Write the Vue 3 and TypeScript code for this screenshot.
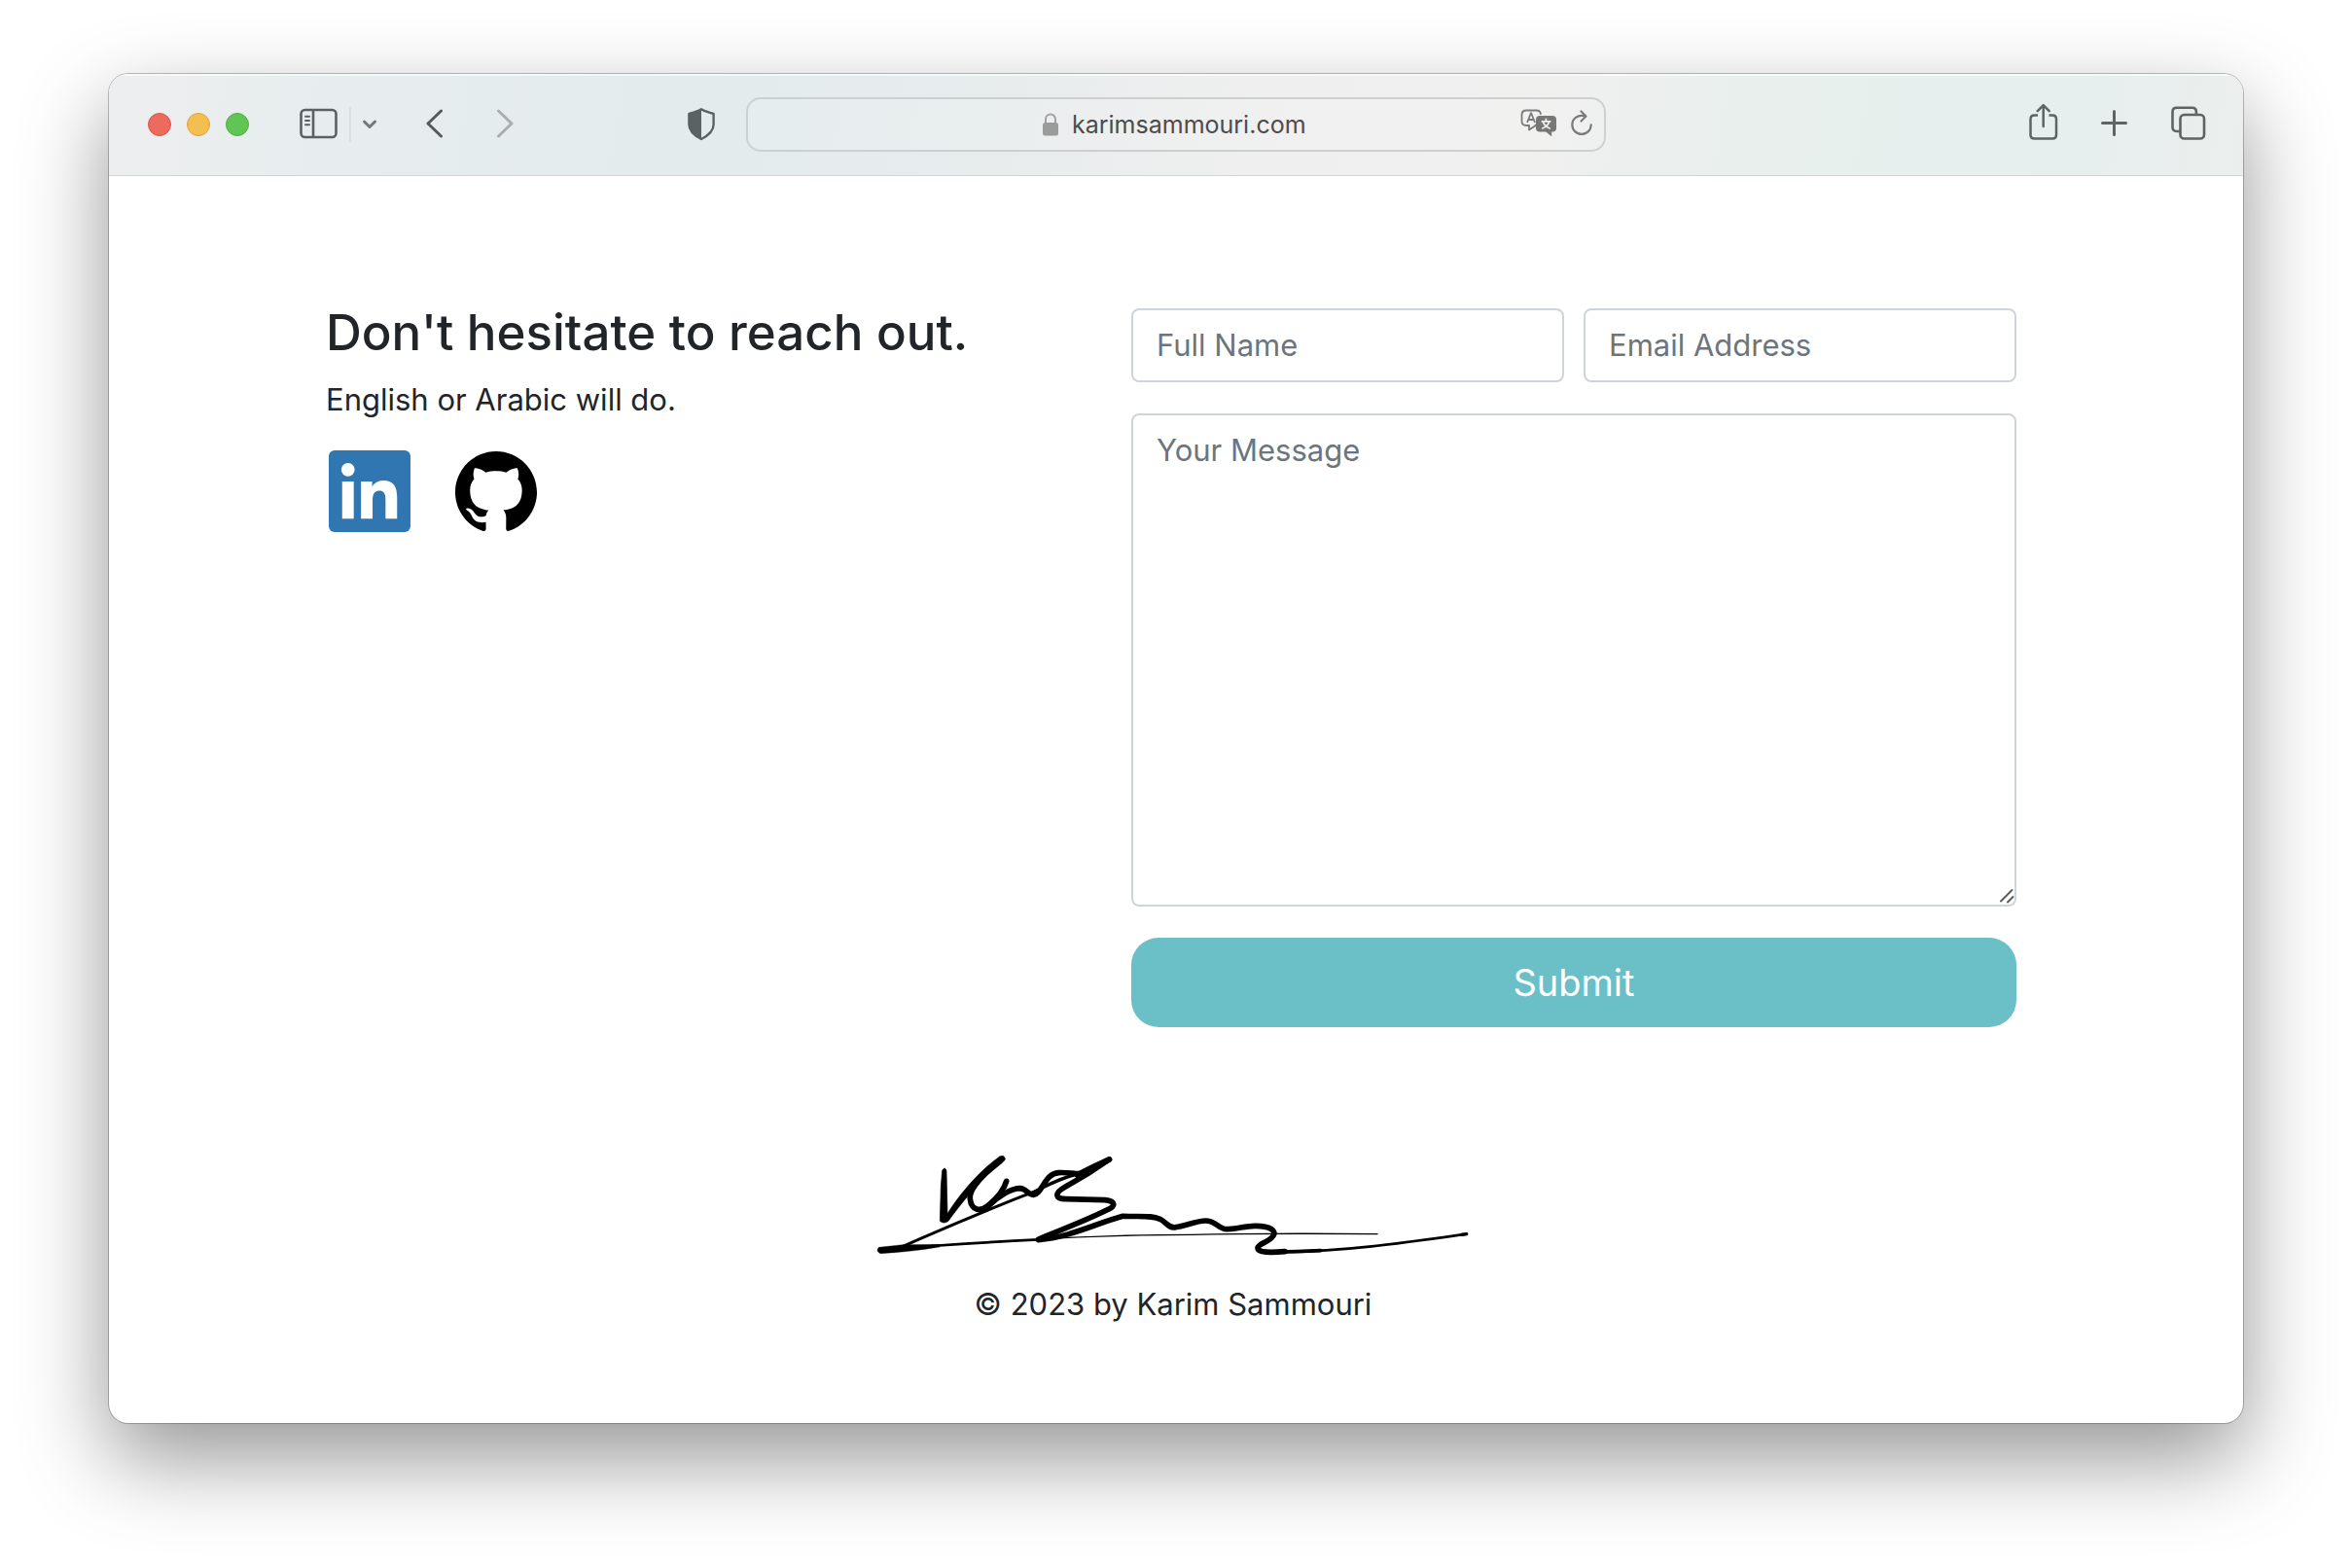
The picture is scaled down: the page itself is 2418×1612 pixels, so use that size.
<script setup lang="ts">
import { ref } from 'vue'

const address = ref('karimsammouri.com')
const fullName = ref('')
const email = ref('')
const message = ref('')
const lights: string[] = ['close', 'minimize', 'zoom']
</script>

<template>
  <div class="desktop">
    <div class="window">
      <header class="toolbar">
        <div class="side">
          <div class="lights">
            <button v-for="name in lights" :key="name" type="button" class="light" :class="name" :aria-label="name"></button>
          </div>
          <div class="sidebar-tools">
            <button type="button" class="tool" aria-label="Show sidebar">
              <svg width="40" height="44" viewBox="0 0 40 44" fill="none" stroke="#5b6162" stroke-width="2.6">
                <rect x="1.5" y="7" width="36" height="28" rx="4" />
                <path d="M14 7v28" />
                <path d="M6 13.7h4M6 18h4M6 22.3h4" stroke-width="2" stroke-linecap="round" />
              </svg>
            </button>
            <span class="divider"></span>
            <button type="button" class="tool" aria-label="Tab groups">
              <svg width="16" height="44" viewBox="0 0 16 44" fill="none" stroke="#73777d" stroke-width="3" stroke-linecap="round" stroke-linejoin="round">
                <path d="M2.500 19l5.500 5.500L13.500 19" />
              </svg>
            </button>
          </div>
          <div class="history">
            <button type="button" class="tool" aria-label="Back">
              <svg width="18" height="44" viewBox="0 0 18 44" fill="none" stroke="#55595a" stroke-width="3" stroke-linecap="round" stroke-linejoin="round">
                <path d="M15.500 8L2 21l13.500 13" />
              </svg>
            </button>
            <button type="button" class="tool" aria-label="Forward">
              <svg width="18" height="44" viewBox="0 0 18 44" fill="none" stroke="#a9adaf" stroke-width="3" stroke-linecap="round" stroke-linejoin="round">
                <path d="M2.500 8L16 21L2.500 34" />
              </svg>
            </button>
          </div>
          <button type="button" class="tool shield" aria-label="Privacy report">
            <svg width="28" height="44" viewBox="0 0 28 44">
              <path d="M14 6.200C17 8.400 21.500 9.200 26.600 11V22c0 7-6 11.600-12.600 15C7.400 33.600 1.400 29 1.400 22V11C6.500 9.200 11 8.400 14 6.200z" fill="none" stroke="#5a6263" stroke-width="2.400" stroke-linejoin="round" />
              <path d="M14 6.200C11 8.400 6.500 9.200 1.400 11V22c0 7 6 11.600 12.600 15z" fill="#5a6263" />
            </svg>
          </button>
        </div>

        <div class="address">
          <div class="site">
            <svg width="16" height="24" viewBox="0 0 16 24">
              <path d="M3 11V6.500a5 5 0 0 1 10 0V11" fill="none" stroke="#a0a2a2" stroke-width="2" />
              <rect x="0" y="10" width="16" height="13.500" rx="2.500" fill="#9a9c9b" />
            </svg>
            <input v-model="address" class="url" type="text" aria-label="Address" />
          </div>
          <div class="page-tools">
            <button type="button" class="tool" aria-label="Translate">
              <svg width="38" height="44" viewBox="0 0 38 44">
                <path d="M16 22.500l-1 1L9 27.500V23H6c-3 0-4.500-1.500-4.500-4.500V12c0-3 1.500-4.500 4.500-4.500h10.500c2.600 0 4 1.200 4.400 3.500" fill="none" stroke="#7b7b7b" stroke-width="1.800" stroke-linejoin="round" stroke-linecap="round" />
                <path d="M7 20l3.800-9.500h.4L15 20M8.600 17h4.800" fill="none" stroke="#7b7b7b" stroke-width="1.800" />
                <path d="M20 13h13c2.700 0 4 1.300 4 4v8.500c0 2.700-1.300 4-4 4h-.8v4.800l-6-4.800H20c-2.700 0-4-1.300-4-4V17c0-2.700 1.300-4 4-4z" fill="#777" />
                <path d="M26.400 15.800v2.400M21.600 18.800h9.800M29.800 18.800c-1 3.600-3.600 6-7.600 7.400M23.200 18.800c1 3.600 3.600 6 7.600 7.400" fill="none" stroke="#f0f0f0" stroke-width="1.700" />
              </svg>
            </button>
            <button type="button" class="tool" aria-label="Reload">
              <svg width="22" height="44" viewBox="0 0 22 44" fill="none" stroke="#7b7b7b" stroke-width="2.200" stroke-linecap="round" stroke-linejoin="round">
                <path d="M14.500 13.300C6.500 11.500 1.300 16 1.300 22.300c0 5.400 4.300 9.600 9.700 9.600s9.700-4.200 9.700-9.600" />
                <path d="M10.500 8.500l5 5-5 5" />
              </svg>
            </button>
          </div>
        </div>

        <div class="side actions">
          <button type="button" class="tool" aria-label="Share">
            <svg width="30" height="44" viewBox="0 0 30 44" fill="none" stroke="#5d6463" stroke-width="2.500" stroke-linecap="round" stroke-linejoin="round">
              <path d="M9 12.600H5.500c-2.600 0-4 1.400-4 4V32.500c0 2.600 1.400 4 4 4h18.500c2.600 0 4-1.400 4-4V16.600c0-2.600-1.400-4-4-4H20.500" stroke-linecap="butt" />
              <path d="M14.700 24V2.500M8.700 8.200l6-6 6 6" />
            </svg>
          </button>
          <button type="button" class="tool" aria-label="New tab">
            <svg width="28" height="44" viewBox="0 0 28 44" fill="none" stroke="#5d6463" stroke-width="3" stroke-linecap="round">
              <path d="M1.500 20.500h24M13.500 8.500v24" />
            </svg>
          </button>
          <button type="button" class="tool" aria-label="Tab overview">
            <svg width="36" height="44" viewBox="0 0 36 44" fill="none" stroke="#5d6463" stroke-width="2.600">
              <rect x="9.500" y="12" width="24.500" height="24.500" rx="4" />
              <path d="M9 29H5.700c-2.800 0-4.200-1.400-4.200-4.200V8.900c0-2.800 1.400-4.200 4.200-4.200h16c2.800 0 4.200 1.400 4.200 4.200V12" />
            </svg>
          </button>
        </div>
      </header>

      <main class="page">
        <section class="contact">
          <div class="intro">
            <h2>Don't hesitate to reach out.</h2>
            <p>English or Arabic will do.</p>
            <div class="social">
              <a href="#linkedin" aria-label="LinkedIn">
                <svg width="84" height="84" viewBox="0 0 24 24">
                  <rect width="24" height="24" rx="1.700" fill="#3077b2" />
                  <path transform="translate(.54 .54) scale(.955)" fill="#fff" d="M20.447 20.452h-3.554v-5.569c0-1.328-.027-3.037-1.852-3.037-1.853 0-2.136 1.445-2.136 2.939v5.667H9.351V9h3.414v1.561h.046c.477-.9 1.637-1.850 3.370-1.850 3.601 0 4.267 2.370 4.267 5.455v6.286zM5.337 7.433a2.062 2.062 0 0 1-2.063-2.065 2.064 2.064 0 1 1 2.063 2.065zm1.782 13.019H3.555V9h3.564v11.452z" />
                </svg>
              </a>
              <a href="#github" aria-label="GitHub">
                <svg width="84" height="84" viewBox="0 0 24 24">
                  <path d="M12 .297c-6.630 0-12 5.373-12 12 0 5.303 3.438 9.800 8.205 11.385.6.113.82-.258.82-.577 0-.285-.01-1.040-.015-2.040-3.338.724-4.042-1.610-4.042-1.610C4.422 18.070 3.633 17.700 3.633 17.700c-1.087-.744.084-.729.084-.729 1.205.084 1.838 1.236 1.838 1.236 1.070 1.835 2.809 1.305 3.495.998.108-.776.417-1.305.76-1.605-2.665-.3-5.466-1.332-5.466-5.930 0-1.310.465-2.380 1.235-3.220-.135-.303-.54-1.523.105-3.176 0 0 1.005-.322 3.300 1.230.96-.267 1.980-.399 3-.405 1.020.006 2.040.138 3 .405 2.280-1.552 3.285-1.230 3.285-1.230.645 1.653.24 2.873.12 3.176.765.84 1.230 1.910 1.230 3.220 0 4.610-2.805 5.625-5.475 5.920.42.36.81 1.096.81 2.220 0 1.606-.015 2.896-.015 3.286 0 .315.21.69.825.57C20.565 22.092 24 17.592 24 12.297c0-6.627-5.373-12-12-12" />
                </svg>
              </a>
            </div>
          </div>

          <form class="form" @submit.prevent>
            <div class="pair">
              <input v-model="fullName" class="field" type="text" placeholder="Full Name" aria-label="Full Name" />
              <input v-model="email" class="field" type="email" placeholder="Email Address" aria-label="Email Address" />
            </div>
            <div class="message">
              <textarea v-model="message" class="field" placeholder="Your Message" aria-label="Your Message"></textarea>
              <svg class="grip" width="16" height="16" viewBox="0 0 16 16" fill="none" stroke="#5c5c5c" stroke-width="2" stroke-linecap="round">
                <path d="M2 13.500L13.500 2M9 14.500l5.500-5.500" />
              </svg>
            </div>
            <button type="submit" class="submit">Submit</button>
          </form>
        </section>

        <footer class="footer">
          <svg class="signature" width="610" height="107" viewBox="30 50 1830 321" fill="none" stroke="#000" stroke-width="17" stroke-linecap="round" stroke-linejoin="round">
            <path d="M240 96Q246 97 246 104L249 235C285 178 345 105 410 59Q424 54 427 66C425 76 398 93 375 113C340 145 290 205 252 258Q238 268 226 258L229 150L233 102Q235 97 240 96z" fill="#000" stroke="#000" stroke-width="2" />
            <path d="M418 66C370 105 314 155 319 190C323 226 350 229 372 212C400 190 422 165 431 135" />
            <path d="M375 212C405 182 445 157 474 157C492 158 498 178 514 177C535 175 543 140 565 120C585 102 612 110 660 112" />
            <path d="M748 68C710 85 680 100 650 116" stroke-width="18" />
            <path d="M650 113C600 124 560 146 520 166" stroke-width="10" />
            <path d="M520 166C400 212 260 270 110 337" stroke-width="9" />
            <path d="M748 68C700 102 645 135 612 153C578 172 580 190 615 190L735 193C768 196 768 212 745 222C680 255 600 285 530 314" />
            <path d="M530 316C625 308 700 268 790 243C850 245 878 240 905 252C925 262 930 281 953 277C980 274 1018 257 1045 257C1078 257 1085 283 1110 283C1140 283 1170 272 1200 273C1245 274 1264 287 1254 303C1243 322 1208 328 1206 340C1205 357 1250 355 1290 352" />
            <path d="M1270 353C1320 353 1360 351 1400 349" stroke-width="11" />
            <path d="M1290 353C1480 351 1670 323 1850 298" stroke-width="8" />
            <path d="M1835 300L1850 298" stroke-width="10" />
            <path d="M38 339L110 331L225 330V338C160 349 100 355 42 358Q26 350 38 339z" fill="#000" stroke-width="1" />
            <path d="M200 335C330 326 430 320 530 315" stroke-width="8" />
            <path d="M530 314C700 304 850 300 1000 300C1200 296 1400 296 1575 298" stroke-width="4" />
          </svg>
          <p>© 2023 by Karim Sammouri</p>
        </footer>
      </main>
    </div>
  </div>
</template>

<style>
body {
  background: #fff;
}
</style>

<style scoped>
.desktop {
  padding: 76px 112px 148px;
  font-family: Inter, "Liberation Sans", sans-serif;
  color: #212529;
}

.window {
  border-radius: 20px;
  background: #fff;
  box-shadow: 0 0 0 1px rgba(0, 0, 0, 0.24), 0 36px 90px rgba(0, 0, 0, 0.42);
  overflow: hidden;
}

.toolbar {
  display: grid;
  grid-template-columns: 1fr minmax(0, 884px) 1fr;
  align-items: center;
  height: 104px;
  border-bottom: 1px solid #d3d6d6;
  box-shadow: inset 0 2px 0 rgba(255, 255, 255, 0.6);
  background: linear-gradient(100deg, #eeeeef 0%, #e8edee 8%, #e3ebed 27%, #e7eced 40%, #efefef 54%, #f0f0ef 66%, #e9efed 76%, #e5efed 90%, #ebeeed 100%);
}

.side {
  display: flex;
  align-items: center;
}

.lights {
  display: flex;
  gap: 16px;
  margin: 0 52px 0 40px;
}

.light {
  width: 24px;
  height: 24px;
  padding: 0;
  border: 1px solid #dd5549;
  border-radius: 50%;
  background: #ed6a5e;
}

.light.minimize {
  border-color: #dba23f;
  background: #f5bf4f;
}

.light.zoom {
  border-color: #50ae43;
  background: #61c554;
}

.tool {
  display: block;
  padding: 0;
  border: 0;
  background: none;
}

.tool svg,
.social svg,
.signature {
  display: block;
}

.sidebar-tools {
  display: flex;
  align-items: center;
  gap: 11px;
}

.divider {
  width: 2px;
  height: 36px;
  background: #dbdfe0;
}

.history {
  display: flex;
  gap: 54px;
  margin-left: 50px;
}

.shield {
  margin: 0 32px 0 auto;
}

.address {
  display: grid;
  grid-template-columns: 1fr auto 1fr;
  align-items: center;
  box-sizing: border-box;
  height: 56px;
  border: 2px solid #cdd0d1;
  border-radius: 15px;
  background: rgba(255, 255, 255, 0.1);
}

.site {
  display: flex;
  grid-column: 2;
  align-items: center;
  gap: 14px;
}

.url {
  width: 244px;
  padding: 0;
  border: 0;
  background: none;
  font: 25px/32px Inter, "Liberation Sans", sans-serif;
  color: #4b4c4c;
}

.page-tools {
  display: flex;
  justify-content: flex-end;
  gap: 14px;
  padding-right: 12px;
}

.actions {
  justify-content: flex-end;
  gap: 44px;
  padding-right: 38px;
}

.page {
  padding: 128px 233px 98px 223px;
}

.contact {
  display: grid;
  grid-template-columns: 6fr 7fr;
  gap: 48px;
}

h2 {
  margin: 0 0 12px;
  font-size: 51px;
  font-weight: 500;
  line-height: 66px;
  white-space: nowrap;
}

p {
  margin: 0;
  font-size: 31px;
  line-height: 48px;
}

.social {
  display: flex;
  gap: 46px;
  margin: 28px 0 0 3px;
}

.form {
  display: flex;
  flex-direction: column;
  gap: 32px;
  margin-top: 8px;
}

.pair {
  display: grid;
  grid-template-columns: 1fr 1fr;
  gap: 20px;
}

.field {
  display: block;
  box-sizing: border-box;
  width: 100%;
  min-width: 0;
  padding: 12px 24px;
  border: 2px solid #ced4da;
  border-radius: 8px;
  background: #fff;
  font: 31px/48px Inter, "Liberation Sans", sans-serif;
  color: #212529;
}

.field::placeholder {
  color: #6c757d;
  opacity: 1;
}

.message {
  position: relative;
}

textarea.field {
  height: 507px;
  resize: none;
}

.grip {
  position: absolute;
  right: 2px;
  bottom: 3px;
}

.submit {
  height: 92px;
  border: 0;
  border-radius: 28px;
  background: #6bbfc7;
  font: 38px/60px Inter, "Liberation Sans", sans-serif;
  color: #fff;
}

.footer {
  display: flex;
  flex-direction: column;
  align-items: center;
  gap: 24px;
  margin: 130px 0 0 4px;
}

.signature {
  max-width: 100%;
}
</style>
